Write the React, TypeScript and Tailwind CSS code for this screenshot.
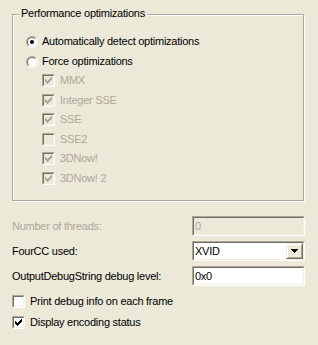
import type { ReactNode } from 'react';

const CHECK = [
    [6],
    [5, 6],
    [0, 4, 5, 6],
    [0, 1, 3, 4, 5],
    [0, 1, 2, 3, 4],
    [1, 2, 3],
    [2],
];

function CheckBox({ checked, disabled }: { checked: boolean; disabled?: boolean }) {
    return (
        <div className="h-[13px] w-[13px] shrink-0 border border-t-[#aca899] border-l-[#aca899] border-r-white border-b-white">
            <div
                className={`h-full w-full border border-t-[#716f64] border-l-[#716f64] border-r-[#f1efe2] border-b-[#f1efe2] ${
                    disabled ? 'bg-[#ece9d8]' : 'bg-white'
                }`}
            >
                {checked && (
                    <svg width="7" height="7" className="ml-[1px] mt-[1px]" shapeRendering="crispEdges">
                        {CHECK.map((row, y) =>
                            row.map((x) => (
                                <rect key={`${x}-${y}`} x={x} y={y} width="1" height="1" fill={disabled ? '#aca899' : '#000'} />
                            )),
                        )}
                    </svg>
                )}
            </div>
        </div>
    );
}

function Radio({ checked }: { checked: boolean }) {
    return (
        <div className="h-[12px] w-[12px] shrink-0 rounded-full border border-t-[#aca899] border-l-[#aca899] border-r-white border-b-white">
            <div className="flex h-full w-full items-center justify-center rounded-full border border-t-[#716f64] border-l-[#716f64] border-r-[#f1efe2] border-b-[#f1efe2] bg-white">
                {checked && <div className="h-[4px] w-[4px] rounded-full bg-black" />}
            </div>
        </div>
    );
}

function Field({ children, disabled, combo }: { children: ReactNode; disabled?: boolean; combo?: boolean }) {
    return (
        <div className="h-[20px] w-[113px] border border-t-[#aca899] border-l-[#aca899] border-r-white border-b-white">
            <div
                className={`flex h-full w-full items-center border border-t-[#716f64] border-l-[#716f64] border-r-[#f1efe2] border-b-[#f1efe2] pl-[1px] ${
                    disabled ? 'bg-[#ece9d8] text-[#aca899]' : 'bg-white text-black'
                }`}
            >
                <span className="flex-1 leading-[13px]">{children}</span>
                {combo && (
                    <div className="h-full w-[17px] border border-t-[#f1efe2] border-l-[#f1efe2] border-r-[#716f64] border-b-[#716f64]">
                        <div className="flex h-full w-full items-center justify-center border border-t-white border-l-white border-r-[#aca899] border-b-[#aca899] bg-[#ece9d8]">
                            <svg width="7" height="4" shapeRendering="crispEdges">
                                <path d="M0 0h7v1H0z M1 1h5v1H1z M2 2h3v1H2z M3 3h1v1H3z" fill="#000" />
                            </svg>
                        </div>
                    </div>
                )}
            </div>
        </div>
    );
}

const options = [
    { name: 'MMX', checked: true, h: 'h-[19px]' },
    { name: 'Integer SSE', checked: true, h: 'h-[20px]' },
    { name: 'SSE', checked: true, h: 'h-[19px]' },
    { name: 'SSE2', checked: false, h: 'h-[20px]' },
    { name: '3DNow!', checked: true, h: 'h-[19px]' },
    { name: '3DNow! 2', checked: true, h: 'h-[20px]' },
];

export default function App() {
    return (
        <div
            className="h-[345px] w-[318px] overflow-hidden bg-[#ece9d8] pt-[14px] pl-[12px] text-[11px] tracking-[-0.25px] text-black"
            style={{ fontFamily: '"Liberation Sans", Arial, sans-serif' }}
        >
            <div className="relative h-[187px] w-[292px] border border-[#aca899] pt-[16px] shadow-[inset_1px_1px_0_#fff,1px_1px_0_#fff]">
                <span className="absolute top-[-8px] left-[6px] bg-[#ece9d8] px-[2px] leading-[13px]">
                    Performance optimizations
                </span>

                <div className="flex h-[21px] items-center gap-[4px] pl-[13px]">
                    <Radio checked />
                    <span>Automatically detect optimizations</span>
                </div>
                <div className="flex h-[19px] items-center gap-[4px] pl-[13px]">
                    <Radio checked={false} />
                    <span>Force optimizations</span>
                </div>

                {options.map((o) => (
                    <div key={o.name} className={`flex ${o.h} items-center gap-[5px] pl-[29px] text-[#aca899]`}>
                        <CheckBox checked={o.checked} disabled />
                        <span>{o.name}</span>
                    </div>
                ))}
            </div>

            <div className="mt-[15px] flex w-[293px] flex-col gap-[5px]">
                <div className="flex items-center justify-between">
                    <span className="text-[#aca899]">Number of threads:</span>
                    <Field disabled>0</Field>
                </div>
                <div className="flex items-center justify-between">
                    <span>FourCC used:</span>
                    <Field combo>XVID</Field>
                </div>
                <div className="flex items-center justify-between">
                    <span>OutputDebugString debug level:</span>
                    <Field>0x0</Field>
                </div>
            </div>

            <div className="mt-[5px] flex h-[20px] items-center gap-[5px]">
                <CheckBox checked={false} />
                <span>Print debug info on each frame</span>
            </div>
            <div className="mt-[1px] flex h-[20px] items-center gap-[5px]">
                <CheckBox checked />
                <span>Display encoding status</span>
            </div>
        </div>
    );
}
